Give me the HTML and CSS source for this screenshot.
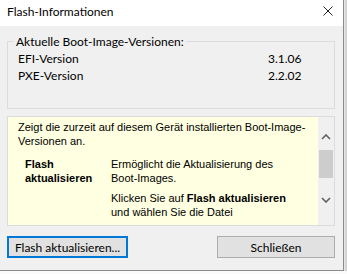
FILE: index.html
```html
<!DOCTYPE html>
<html>
<head>
  <title>Flash-Informationen</title>
  <link rel="stylesheet" href="styles.css">
</head>
<body>
  <div class="screen">
    <div class="dialog">
      <div class="title-bar">
        <span class="title">Flash-Informationen</span>
        <svg class="close" width="10" height="10" viewBox="0 0 10 10">
          <path d="M0.5 0.5 L9.5 9.5 M9.5 0.5 L0.5 9.5" stroke="#222" stroke-width="1" fill="none"/>
        </svg>
      </div>
      <div class="content">
        <fieldset class="versions">
          <legend>Aktuelle Boot-Image-Versionen:</legend>
          <div class="version-row">
            <span class="version-name">EFI-Version</span>
            <span class="version-value">3.1.06</span>
          </div>
          <div class="version-row">
            <span class="version-name">PXE-Version</span>
            <span class="version-value">2.2.02</span>
          </div>
        </fieldset>

        <div class="help-panel">
          <div class="help-text">
            <p class="help-intro">Zeigt die zurzeit auf diesem Gerät installierten Boot-Image-Versionen an.</p>
            <div class="help-table">
              <div class="help-term">Flash aktualisieren</div>
              <div class="help-desc">
                <p>Ermöglicht die Aktualisierung des Boot-Images.</p>
                <p>Klicken Sie auf <b>Flash aktualisieren</b> und wählen Sie die Datei</p>
              </div>
            </div>
          </div>
          <div class="scrollbar">
            <svg class="arrow arrow-up" width="10" height="6" viewBox="0 0 10 6">
              <path d="M1 5 L5 1 L9 5" stroke="#606060" stroke-width="1.6" fill="none"/>
            </svg>
            <div class="thumb"></div>
            <svg class="arrow arrow-down" width="10" height="6" viewBox="0 0 10 6">
              <path d="M1 1 L5 5 L9 1" stroke="#606060" stroke-width="1.6" fill="none"/>
            </svg>
          </div>
        </div>

        <div class="buttons">
          <button class="btn btn-default">Flash aktualisieren...</button>
          <button class="btn btn-close">Schließen</button>
        </div>
      </div>
    </div>
    <div class="side-strip"></div>
  </div>
</body>
</html>
```

FILE: styles.css
```css
/* Dialog styles */
body {
  margin: 0;
  background-color: #fbfbfb;
  font-family: Lato, "Noto Sans", sans-serif;
  font-size: 12px;
  color: #000;
}

.screen {
  display: flex;
  height: 271px;
}

.dialog {
  width: 343px;
  border-right: 1px solid #8c8c8c;
  border-bottom: 1px solid #8c8c8c;
  background-color: #f0f0f0;
  display: flex;
  flex-direction: column;
}

.side-strip {
  flex: 1;
  background-color: #d4d4d4;
  border-left: 1px solid #e6e6e6;
}

.title-bar {
  height: 26px;
  background-color: #fff;
  display: flex;
  align-items: center;
  justify-content: space-between;
  padding: 0 10px 4px 7px;
  box-sizing: border-box;
}

.title {
  font-size: 12px;
}

.content {
  padding: 0 7px;
}

.versions {
  margin: 8px 1px 0 0;
  padding: 1px 0 24px 6px;
  border: 1px solid #dcdcdc;
  line-height: 17px;
}

.versions legend {
  padding: 0 2px;
  line-height: 15px;
}

.version-row {
  display: flex;
  padding-left: 4px;
}

.version-name {
  width: 250px;
}

.help-panel {
  margin-top: 7px;
  margin-right: 1px;
  height: 108px;
  border: 1px solid #dcdcdc;
  display: flex;
  overflow: hidden;
}

.help-text {
  flex: 1;
  background-color: #ffffe1;
  padding: 3px 8px 0 10px;
  font-family: "Liberation Sans", Arial, sans-serif;
  font-size: 11px;
  line-height: 14px;
}

.help-text p {
  margin: 0;
}

.help-intro {
  margin-bottom: 9px !important;
}

.help-table {
  display: grid;
  grid-template-columns: 93px 180px;
}

.help-term {
  padding-left: 7px;
  padding-right: 8px;
  font-weight: bold;
}

.help-desc p {
  margin-bottom: 6px;
}

.scrollbar {
  width: 16px;
  background-color: #f0f0f0;
  display: flex;
  flex-direction: column;
  align-items: center;
}

.arrow-up {
  margin-top: 17px;
}

.thumb {
  width: 14px;
  height: 28px;
  margin-top: 10px;
  background-color: #cdcdcd;
}

.arrow-down {
  margin-top: 19px;
}

.buttons {
  display: flex;
  justify-content: space-between;
  margin-top: 10px;
  margin-right: 1px;
}

.btn {
  height: 22px;
  padding: 0;
  background-color: #e1e1e1;
  border: 1px solid #adadad;
  font-family: Lato, "Noto Sans", sans-serif;
  font-size: 12px;
  color: #000;
}

.btn-default {
  width: 121px;
  border: 2px solid #0078d7;
}

.btn-close {
  width: 118px;
}
```
